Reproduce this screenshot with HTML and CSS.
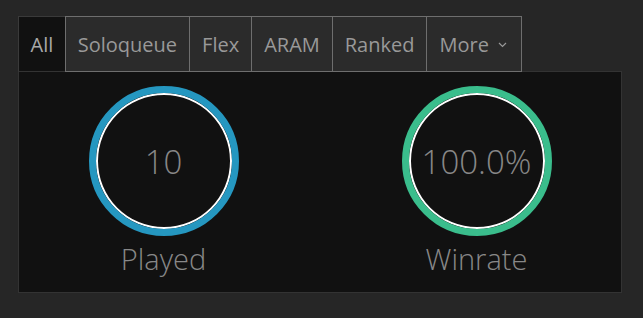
FILE: index.html
```html
<!DOCTYPE html>
<html lang="en">
<head>
 <meta charset="UTF-8">
 <meta name="viewport" content="width=device-width, initial-scale=1.0">
 <title>Stats</title>
 <link rel="stylesheet" href="styles.css">
</head>
<body>

 <div class="statsBox">
  <div class="tabs">
   <div class="tab active">All</div>
   <div class="tab">Soloqueue</div>
   <div class="tab">Flex</div>
   <div class="tab">ARAM</div>
   <div class="tab">Ranked</div>
   <div class="tab last">More
    <svg class="chevron" width="9" height="6" viewBox="0 0 9 6">
     <path d="M1 1 L4.5 4.5 L8 1" fill="none" stroke="currentColor" stroke-width="1.2"/>
    </svg>
   </div>
   <div class="tabFill"></div>
  </div>

  <div class="panel">
   <div class="stat">
    <div class="ring blue"><span class="value">10</span></div>
    <div class="label">Played</div>
   </div>
   <div class="stat">
    <div class="ring green"><span class="value">100.0%</span></div>
    <div class="label">Winrate</div>
   </div>
  </div>
 </div>

</body>
</html>
```

FILE: styles.css
```css
body{
 margin: 0;
 background-color: #262626;
 font-family: "Open Sans", "Liberation Sans", sans-serif;
}

.statsBox{
 width: 604px;
 margin: 16px 0 0 18px;
}

.tabs{
 display: flex;
 height: 56px;
}

.tab{
 box-sizing: border-box;
 height: 56px;
 display: flex;
 align-items: center;
 padding: 0 12px;
 font-size: 20px;
 color: #999;
 background-color: #2b2b2b;
 border: 1px solid #6e6e6e;
 border-right: none;
}

.tab.last{
 border-right: 1px solid #6e6e6e;
 gap: 9px;
 padding-right: 14px;
}

.tab.active{
 background-color: #111;
 color: #a8a8a8;
 border-color: #3a3a3a;
 border-bottom: 1px solid #333;
 padding: 0 11.5px;
}

.chevron{
 margin-top: 2px;
}

.tabFill{
 flex: 1;
 border-bottom: 1px solid #333;
}

.panel{
 box-sizing: border-box;
 height: 221px;
 background-color: #111;
 border: 1px solid #333;
 border-top: none;
 display: flex;
 justify-content: center;
 gap: 163px;
 padding-top: 14px;
}

.stat{
 width: 150px;
 display: flex;
 flex-direction: column;
 align-items: center;
}

.ring{
 box-sizing: border-box;
 width: 150px;
 height: 150px;
 border-radius: 50%;
 border: 7px solid;
 box-shadow: inset 0 0 0 2px #fff;
 display: flex;
 align-items: center;
 justify-content: center;
}

.ring.blue{ border-color: #2597c0; }
.ring.green{ border-color: #3abd8c; }

.value{
 font-size: 33px;
 font-weight: 300;
 color: #888;
}

.label{
 margin-top: 3px;
 font-size: 29px;
 font-weight: 300;
 color: #888;
}
```
